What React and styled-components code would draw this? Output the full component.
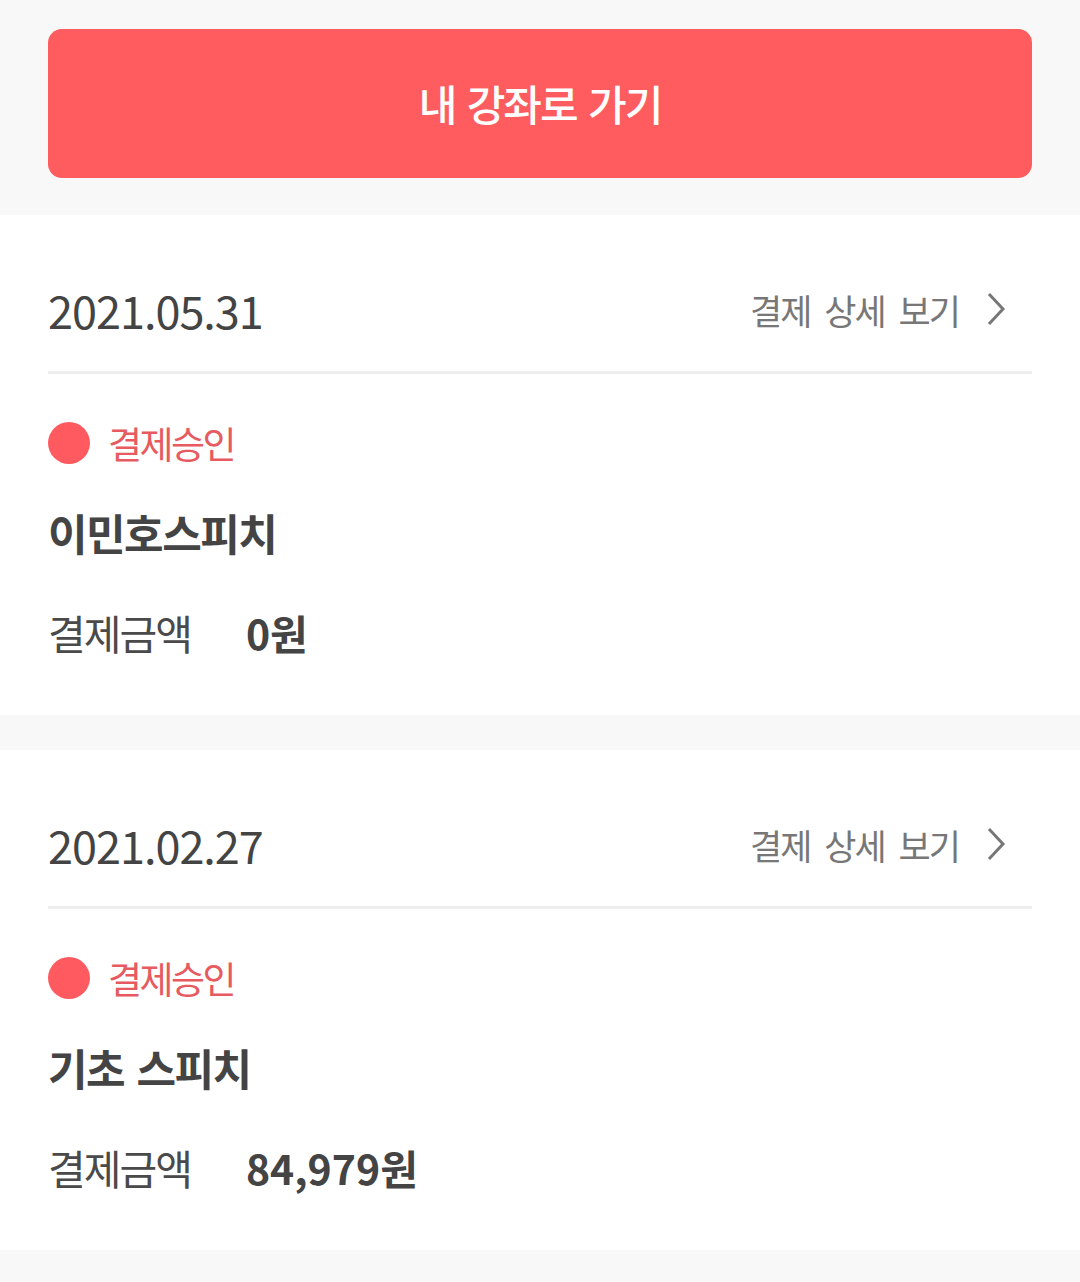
import React from 'react';
import styled, { createGlobalStyle } from 'styled-components';

const GlobalStyle = createGlobalStyle`
  body {
    margin: 0;
    background: #f8f8f8;
    font-family: "Noto Sans CJK KR", "Noto Sans", sans-serif;
    color: #444444;
  }
`;

const StyledPage = styled.div`
  width: 1080px;
  background: #f8f8f8;
  padding-bottom: 34px;
  display: flex;
  flex-direction: column;
  gap: 35px;
`;

const StyledTop = styled.div`
  padding: 29px 48px 2px;
`;

const StyledButton = styled.button`
  display: flex;
  align-items: center;
  justify-content: center;
  width: 100%;
  height: 149px;
  border: none;
  border-radius: 14px;
  background: #ff5c5f;
  color: #ffffff;
  font-family: inherit;
  font-size: 42px;
  font-weight: 500;
  letter-spacing: -2px;
  word-spacing: 4px;
  padding: 0 0 2px;
`;

const StyledCard = styled.section`
  background: #ffffff;
  padding: 0 48px 55px;
`;

const StyledHeader = styled.div`
  display: flex;
  align-items: center;
  justify-content: space-between;
  height: 52px;
  padding: 72px 0 32px;
  border-bottom: 3px solid #eeeeee;
`;

const StyledDate = styled.div`
  font-size: 45px;
  letter-spacing: -1px;
  margin-top: -8px;
  color: #444444;
`;

const StyledLink = styled.a`
  display: flex;
  align-items: center;
  gap: 27px;
  margin-right: 26px;
  margin-top: -8px;
  color: #777777;
  font-size: 35px;
  letter-spacing: -2px;
  word-spacing: 8px;
`;

const StyledStatus = styled.div`
  display: flex;
  align-items: center;
  gap: 18px;
  height: 48px;
  margin-top: 45px;
  color: #e65a60;
  font-size: 37px;
  letter-spacing: -2.5px;
`;

const StyledDot = styled.span`
  width: 42px;
  height: 42px;
  border-radius: 50%;
  background: #ff5a5f;
`;

const StyledTitle = styled.div`
  height: 56px;
  line-height: 56px;
  margin-top: 37px;
  font-size: 43px;
  font-weight: 700;
  letter-spacing: -1.5px;
  word-spacing: 4px;
  color: #444444;
`;

const StyledAmountRow = styled.div`
  display: flex;
  align-items: center;
  gap: 55px;
  height: 56px;
  margin-top: 44px;
  font-size: 41px;
`;

const StyledLabel = styled.span`
  color: #4a4a4a;
  letter-spacing: -2px;
`;

const StyledAmount = styled.span`
  font-weight: 700;
  letter-spacing: 0;
  color: #444444;
`;

const Chevron = () => (
  <svg width="20" height="36" viewBox="0 0 20 36">
    <path d="M3 3 L17 18 L3 33" fill="none" stroke="#777777" strokeWidth="3" />
  </svg>
);

const orders = [
  { date: '2021.05.31', title: '이민호스피치', amount: '0원' },
  { date: '2021.02.27', title: '기초 스피치', amount: '84,979원' },
];

const App = () => (
  <>
    <GlobalStyle />
    <StyledPage>
      <StyledTop>
        <StyledButton>내 강좌로 가기</StyledButton>
      </StyledTop>
      {orders.map(order => (
        <StyledCard key={order.date}>
          <StyledHeader>
            <StyledDate>{order.date}</StyledDate>
            <StyledLink>
              결제 상세 보기
              <Chevron />
            </StyledLink>
          </StyledHeader>
          <StyledStatus>
            <StyledDot />
            결제승인
          </StyledStatus>
          <StyledTitle>{order.title}</StyledTitle>
          <StyledAmountRow>
            <StyledLabel>결제금액</StyledLabel>
            <StyledAmount>{order.amount}</StyledAmount>
          </StyledAmountRow>
        </StyledCard>
      ))}
    </StyledPage>
  </>
);

export default App;
